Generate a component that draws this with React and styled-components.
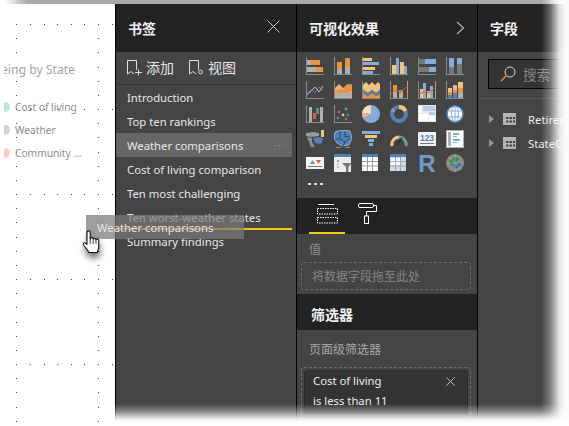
import React from "react";
import styled, { createGlobalStyle } from "styled-components";

const FONT = `"Noto Sans", "Noto Sans CJK SC", sans-serif`;
const ORANGE = "#e8933f";
const TAN = "#f0c67e";
const BLUE = "#85acd6";
const DEEP = "#4f81b8";
const GRAY = "#b0b0b0";
const AXIS = "#8a8a8a";
const DARKBAR = "#777";
const RED = "#d9604a";
const PINK = "#eeb0a4";

const Global = createGlobalStyle`
  html, body { margin: 0; padding: 0; background: #fff; }
  body { font-family: ${FONT}; }
`;

const Page = styled.div`
  position: relative;
  width: 569px;
  height: 426px;
  overflow: hidden;
  background: #fff;
`;

const TopStrip = styled.div`
  height: 4px;
  background: linear-gradient(to right, #fff 0, #fff 4px, #a9a9a9 28px, #a9a9a9 545px, #fff 566px);
`;

const Panels = styled.div`
  display: flex;
  height: 418px;
  margin-left: 4px;
`;

const Canvas = styled.div`
  position: relative;
  flex: none;
  width: 111px;
  overflow: hidden;
  background: #fff;
  border-right: 1px solid #000;
`;

const DotLayer = styled.svg`
  position: absolute;
  left: 0;
  top: 0;
`;

const CanvasTitle = styled.div`
  position: relative;
  margin-top: 57px;
  width: 71px;
  height: 18px;
  display: flex;
  justify-content: flex-end;
  font-size: 12.2px;
  line-height: 18px;
  white-space: nowrap;
  color: #a6a6a6;
`;

const Legend = styled.div`
  position: relative;
  margin-top: 19px;
  display: flex;
  flex-direction: column;
  gap: 5px;
`;

const LegendRow = styled.div`
  display: flex;
  align-items: center;
  gap: 5px;
  height: 18px;
  margin-left: -4px;
  font-size: 10.2px;
  color: #8c8c8c;
  white-space: nowrap;
`;

const LegendDot = styled.span`
  flex: none;
  width: 10px;
  height: 10px;
  border-radius: 50%;
  background: ${(p) => p.$color};
`;

const Panel = styled.div`
  flex: none;
  width: ${(p) => p.$width || 180}px;
  display: flex;
  flex-direction: column;
  background: #444;
  border-right: ${(p) => (p.$last ? "none" : "1px solid #000")};
`;

const Header = styled.div`
  flex: none;
  height: 48px;
  padding: 0 ${(p) => p.$inset || 12}px 0 12px;
  display: flex;
  align-items: center;
  justify-content: space-between;
  background: #222;
  color: #f2f2f2;
  font-size: 14px;
  font-weight: 700;
`;

const BookmarkBar = styled.div`
  flex: none;
  height: 32px;
  box-sizing: content-box;
  padding: 0 0 0 10px;
  display: flex;
  align-items: center;
  gap: 14px;
  border-bottom: 1px solid #333;
`;

const BarAction = styled.div`
  display: flex;
  align-items: center;
  gap: 3px;
  margin-top: -2px;
  font-size: 14px;
  color: #e6e6e6;
`;

const BookmarkList = styled.div`
  padding-right: 4px;
`;

const BookmarkRow = styled.div`
  height: 24px;
  padding: 0 7px 0 11px;
  display: flex;
  align-items: center;
  justify-content: space-between;
  font-size: 11.3px;
  color: #e8e8e8;
  background: ${(p) => (p.$active ? "#666" : "transparent")};
`;

const RowDots = styled.span`
  color: #8f8f8f;
  font-size: 10px;
  letter-spacing: 1px;
`;

const IconGrid = styled.div`
  flex: none;
  height: 146px;
  box-sizing: border-box;
  padding: 5px 0 0 9px;
  display: grid;
  grid-template-columns: repeat(6, 18px);
  grid-auto-rows: 18px;
  column-gap: 10px;
  row-gap: 6.2px;
`;

const MoreDots = styled.div`
  display: flex;
  align-items: center;
  gap: 3px;
  margin: 0 0 5px 2px;
  grid-column: 1 / 2;
`;

const MoreDot = styled.span`
  flex: none;
  width: 3px;
  height: 2px;
  background: #ddd;
`;

const TabBar = styled.div`
  flex: none;
  height: 36px;
  padding-left: 12px;
  display: flex;
  gap: 4px;
  background: #222;
`;

const Tab = styled.div`
  width: 36px;
  height: 36px;
  box-sizing: border-box;
  display: flex;
  align-items: center;
  justify-content: center;
  padding-bottom: 3px;
  border-bottom: 2px solid ${(p) => (p.$active ? "#f2c811" : "transparent")};
`;

const Section = styled.div`
  flex: ${(p) => (p.$grow ? 1 : "none")};
  height: ${(p) => (p.$grow ? "auto" : "60px")};
  padding: ${(p) => (p.$grow ? 11 : 7)}px 6px 0 4px;
  box-sizing: border-box;
  overflow: hidden;
`;

const SectionLabel = styled.div`
  padding-left: 8px;
  height: 17px;
  font-size: 12px;
  line-height: 17px;
  color: ${(p) => p.$color || "#8e8e8e"};
`;

const DropWell = styled.div`
  margin-top: 4px;
  height: 28px;
  box-sizing: border-box;
  padding-left: 10px;
  display: flex;
  align-items: center;
  border: 1px dashed #6b6b6b;
  border-radius: 3px;
  font-size: 12px;
  color: #868686;
`;

const FilterWell = styled.div`
  margin-top: 9px;
  height: 80px;
  box-sizing: border-box;
  padding: 2px;
  border: 1px dashed #6b6b6b;
  border-radius: 3px;
`;

const FilterCard = styled.div`
  position: relative;
  height: 44px;
  box-sizing: border-box;
  padding: 0 8px;
  background: #333;
  border: 1px solid #2a2a2a;
  border-radius: 3px;
  font-size: 11.3px;
  line-height: 20px;
  color: #eee;
`;

const FilterClose = styled.svg`
  position: absolute;
  right: 12px;
  top: 6px;
`;

const FilterHeader = styled.div`
  flex: none;
  height: 36px;
  box-sizing: border-box;
  padding: 3px 0 0 14px;
  display: flex;
  align-items: center;
  background: #222;
  color: #f4f4f4;
  font-size: 14px;
  font-weight: 700;
`;

const SearchArea = styled.div`
  flex: none;
  height: 47px;
  box-sizing: border-box;
  padding: 7px 0 0 10px;
  border-bottom: 1px solid #585858;
`;

const SearchBox = styled.div`
  width: 110px;
  height: 30px;
  box-sizing: border-box;
  padding-left: 11px;
  display: flex;
  align-items: center;
  gap: 7px;
  background: #333;
  border: 1px solid #000;
  font-size: 13.5px;
  color: #888;
`;

const FieldList = styled.div`
  padding: 8px 0 0 11px;
`;

const FieldRow = styled.div`
  height: 24px;
  display: flex;
  align-items: center;
  font-size: 11.3px;
  color: #eee;
  white-space: nowrap;
`;

const Caret = styled.span`
  width: 0;
  height: 0;
  margin-right: 9px;
  border-left: 5px solid #8a9aa8;
  border-top: 4px solid transparent;
  border-bottom: 4px solid transparent;
`;

const FieldName = styled.span`
  margin-left: 12px;
`;

const DragGhost = styled.div`
  position: absolute;
  left: 86px;
  top: 215px;
  width: 158px;
  height: 24px;
  box-sizing: border-box;
  padding: 0 7px 0 11px;
  display: flex;
  align-items: center;
  justify-content: space-between;
  background: rgba(120, 120, 120, 0.72);
  color: #e4e4e4;
  font-size: 11.3px;
`;

const DropLine = styled.div`
  position: absolute;
  left: 116px;
  top: 228px;
  width: 176px;
  height: 2px;
  background: #f2c811;
`;

const HandCursor = styled.svg`
  position: absolute;
  left: 82px;
  top: 230px;
  filter: drop-shadow(1px 5px 3px rgba(0, 0, 0, 0.55));
`;

const FadeRight = styled.div`
  position: absolute;
  top: 0;
  right: 0;
  width: 28px;
  height: 100%;
  background: linear-gradient(to right, rgba(255, 255, 255, 0) 0, rgba(255, 255, 255, 0.3) 9px, rgba(255, 255, 255, 0.85) 18px, #fafafa 24px);
`;

const FadeBottom = styled.div`
  position: absolute;
  left: 115px;
  right: 0;
  top: 404px;
  height: 22px;
  background: linear-gradient(to bottom, rgba(255, 255, 255, 0) 0, rgba(255, 255, 255, 0.35) 7px, rgba(255, 255, 255, 0.9) 15px, #fff 18px);
`;

const Glyph = styled.svg`
  display: block;
  flex: none;
`;

const PanelClose = styled(Glyph)`
  margin-top: -3px;
`;

// small helpers for the visual gallery, everything in an 18x18 box
const R = ({ x, y, w, h, f }) => <rect x={x} y={y} width={w} height={h} fill={f} />;
const Axes = ({ c = AXIS }) => (
  <>
    <rect x="0" y="0" width="1" height="18" fill={c} />
    <rect x="0" y="17" width="18" height="1" fill={c} />
  </>
);
const Bars = ({ items }) => items.map(([x, y, w, h, f], i) => <R key={i} x={x} y={y} w={w} h={h} f={f} />);

const GALLERY = [
  <><Axes /><Bars items={[[1,3,4,5,GRAY],[5,3,9,5,ORANGE],[1,10,9,5,GRAY],[10,10,7,5,ORANGE]]} /></>,
  <><Axes /><Bars items={[[3,5,5,7,ORANGE],[3,12,5,5,GRAY],[11,1,5,9,ORANGE],[11,10,5,7,GRAY]]} /></>,
  <><Axes /><Bars items={[[1,1,9,3,TAN],[1,5,16,3,BLUE],[1,10,12,3,TAN],[1,14,10,3,BLUE]]} /></>,
  <><Axes /><Bars items={[[2,8,4,9,TAN],[6,1,3,16,BLUE],[10,5,4,12,TAN],[14,9,3,8,BLUE]]} /></>,
  <><Axes /><Bars items={[[1,2,6,5,DARKBAR],[7,2,11,5,BLUE],[1,10,10,5,DARKBAR],[11,10,7,5,BLUE]]} /></>,
  <><Axes /><Bars items={[[3,1,5,9,BLUE],[3,10,5,7,DARKBAR],[11,1,5,6,BLUE],[11,7,5,10,DARKBAR]]} /></>,
  <><Axes /><polyline points="1,15 5,9 9,12 13,6 17,9" fill="none" stroke={DEEP} strokeWidth="1" /><polyline points="1,13 5,10 9,6 13,11 17,5" fill="none" stroke={PINK} strokeWidth="1" /></>,
  <><Axes /><path d="M1 7L5 3 9 7 14 3 18 5V17H1Z" fill={TAN} opacity=".9" /><path d="M1 11L5 8 9 9 12 4 18 3V10L12 13H1Z" fill={ORANGE} /><path d="M1 12H18V17H1Z" fill={GRAY} /></>,
  <><Axes /><path d="M1 4L4 1 7 4 10 1 13 4 16 1 18 3V9L14 12 10 9 6 12 1 9Z" fill={TAN} /><path d="M1 9L6 12 10 9 14 12 18 9V13L14 15 10 12 6 15 1 12Z" fill={DEEP} /><path d="M1 12L6 15 10 12 14 15 18 13V17H1Z" fill={ORANGE} /></>,
  <><Axes /><Bars items={[[3,4,4,7,ORANGE],[3,11,4,6,GRAY],[9,9,4,3,ORANGE],[9,12,4,5,GRAY],[17,0,1,18,ORANGE]]} /><polyline points="1,13 6,9 11,11 16,6" fill="none" stroke={RED} strokeWidth="1" /></>,
  <><Axes /><Bars items={[[2,8,3,9,TAN],[5,2,3,15,BLUE],[9,10,3,7,TAN],[12,5,3,12,BLUE],[17,0,1,18,ORANGE]]} /><polyline points="1,13 6,11 11,12 16,7" fill="none" stroke={RED} strokeWidth="1" /></>,
  <><Axes /><Bars items={[[2,7,4,4,TAN],[2,11,4,3,ORANGE],[2,14,4,3,DEEP],[7,4,4,5,PINK],[7,9,4,3,ORANGE],[7,12,4,5,DEEP],[12,1,5,6,TAN],[12,7,5,5,ORANGE],[12,12,5,5,GRAY]]} /></>,
  <><Axes /><Bars items={[[3,2,3,15,GRAY],[7,8,3,6,RED],[10,3,3,6,"#5c8f6a"],[14,2,3,15,GRAY]]} /></>,
  <><Axes /><circle cx="5" cy="7" r="1.4" fill={RED} /><circle cx="12" cy="4" r="1.4" fill="#5fa59a" /><circle cx="9" cy="10" r="1.4" fill={TAN} /><circle cx="4" cy="13" r="1.4" fill={DEEP} /><circle cx="14" cy="10" r="1.4" fill={DEEP} /><circle cx="12" cy="14" r="1.4" fill="#777" /></>,
  <><path d="M9 0A9 9 0 1 1 1.5 14L9 9Z" fill={BLUE} /><path d="M9 9L1.5 14A9 9 0 0 1 0 8Z" fill={PINK} /><path d="M9 9L0 8A9 9 0 0 1 9 0Z" fill="#f3dfbd" /></>,
  <><circle cx="9" cy="9" r="7" fill="none" stroke={DEEP} strokeWidth="4" /><path d="M9 2A7 7 0 0 1 15.5 6" fill="none" stroke={TAN} strokeWidth="4" /><path d="M2.5 7A7 7 0 0 1 4 4.5" fill="none" stroke="#9a9a9a" strokeWidth="4" /></>,
  <><R x={0} y={0} w={18} h={17} f="#e9e9e9" /><Bars items={[[1,1,3,3,"#fff"],[5,1,12,5,"#b7cfe6"],[1,5,3,3,"#fff"],[1,9,9,7,"#fff"],[11,7,6,3,"#b7cfe6"],[11,11,6,5,"#fff"]]} /></>,
  <><circle cx="9" cy="9" r="8" fill="#fff" stroke={DEEP} strokeWidth="1.4" /><ellipse cx="9" cy="9" rx="3.5" ry="8" fill="none" stroke={BLUE} /><path d="M1.5 6H16.5M1.5 12H16.5M9 1V17" stroke={BLUE} /></>,
  <><path d="M0 3L7 2 13 3 13 6 5 7 0 6Z" fill="#9a9a9a" /><path d="M15 0H18V7H15Z" fill={TAN} /><path d="M1 7L6 8V12L9 17H5L3 12Z" fill="#8c8c8c" /><path d="M7 8L14 7 17 9 15 14 9 13Z" fill={DEEP} /></>,
  <><path d="M1 2L7 0 16 1 18 8 15 15 8 16 3 13 0 8Z" fill={DEEP} stroke="#cfe0f0" strokeWidth=".6" /><path d="M6 1V9L1 9M6 9L11 12 9 16M11 12L17 8M11 1V7L16 6" stroke="#1f3f66" strokeWidth=".8" fill="none" /><R x={2} y={17} w={5} h={1} f={AXIS} /><R x={11} y={17} w={5} h={1} f={AXIS} /></>,
  <><Bars items={[[0,1,18,3,BLUE],[3,5,12,3,TAN],[6,9,6,3,BLUE],[7,13,4,3,BLUE]]} /></>,
  <><path d="M2 16A7.5 7.5 0 0 1 9 7" fill="none" stroke={TAN} strokeWidth="3" /><path d="M9 7A7.5 7.5 0 0 1 16 16" fill="none" stroke="#6f9f8c" strokeWidth="3" /><path d="M7 15L12 8" stroke="#333" strokeWidth="1.6" /></>,
  <><R x={0} y={2} w={18} h={14} f="#f4f4f4" /><text x="9" y="11" textAnchor="middle" fontSize="8.5" fontWeight="700" fontFamily="Liberation Sans" fill={DEEP}>123</text><R x={2} y={13} w={14} h={1} f="#777" /></>,
  <><R x={0} y={0} w={18} h={18} f={GRAY} /><R x={1} y={1} w={16} h={16} f="#fff" /><R x={2} y={2} w={3} h={14} f={GRAY} /><Bars items={[[7,3,6,2,BLUE],[7,6,4,1,BLUE],[7,9,7,2,BLUE],[7,12,4,1,BLUE]]} /></>,
  <><R x={0} y={3} w={18} h={12} f="#f4f4f4" /><path d="M4 10L6.5 6 9 10Z" fill="#5f9f84" /><path d="M10 6H15L12.5 10Z" fill={RED} /><R x={2} y={12} w={14} h={1} f="#777" /></>,
  <><R x={0} y={0} w={17} h={18} f="#eee" /><R x={0} y={0} w={17} h={3} f={DEEP} /><Bars items={[[3,6,2,2,BLUE],[3,9,2,2,TAN],[3,12,2,2,PINK]]} /><path d="M8 9H18L14.5 13V18H12V13Z" fill="#777" /></>,
  <><R x={0} y={0} w={16} h={17} f="#fff" /><R x={0} y={0} w={16} h={3} f={DEEP} /><path d="M5.5 3V17M10.5 3V17M0 7.5H16M0 12H16" stroke="#999" /></>,
  <><R x={0} y={0} w={16} h={17} f="#cfdbe9" /><R x={0} y={0} w={16} h={3} f={DEEP} /><Bars items={[[1,4,4,3,"#fff"],[6,4,4,3,"#fff"],[1,8,4,3,"#fff"],[6,8,4,3,"#fff"]]} /><path d="M5.5 3V17M10.5 3V17M0 7.5H16M0 12H16" stroke="#9aa8b8" /></>,
  <text x="9" y="17.5" textAnchor="middle" fontSize="24" fontWeight="700" fontFamily="Liberation Sans" fill="#6f9bc8">R</text>,
  <><circle cx="9" cy="9" r="9" fill="#8a8a8a" /><path d="M3 7L9 3 14 5 10 8 5 12Z" fill="#2f8f4f" /><path d="M7 11L14 8 15 12 9 15Z" fill="#2f6fb8" /><path d="M1 9H17M9 0V18M3 3L15 15" stroke="#b0b0b0" strokeWidth=".6" /></>,
];

const DOT_COLS = [16, 30, 44, 57, 71, 84, 98, 112];
const DOT_ROWS = [24, 109, 194, 279, 364];
const DOT_STEPS = Array.from({ length: 29 }, (_, i) => Math.round(24 + i * 14.17));

const CanvasDots = () => (
  <DotLayer width="111" height="418" viewBox="4 4 111 418">
    {DOT_ROWS.map((y) => DOT_COLS.map((x) => <rect key={`${x}-${y}`} x={x} y={y} width="1" height="1" fill="#444" />))}
    {DOT_STEPS.map((y) => [16, 98].map((x) => <rect key={`c${x}-${y}`} x={x} y={y} width="1" height="1" fill="#444" />))}
  </DotLayer>
);

const BookmarkIcon = ({ badge }) => (
  <Glyph width="17" height="17" viewBox="0 0 17 17" fill="none" stroke="#e0e0e0">
    <path d="M1.5 1.5H10.5V11M1.5 1.5V15L5 12.5 8 15" />
    {badge === "plus" ? <path d="M9 13.5H16M12.5 10.5V16.5" /> : <circle cx="12.5" cy="13" r="1.8" />}
  </Glyph>
);

const CloseLines = () => <path d="M.5.5L12.5 12.5M12.5.5L.5 12.5" />;

const FieldTableIcon = () => (
  <Glyph width="13" height="12" viewBox="0 0 13 12">
    <rect width="13" height="12" fill="#b4b4b4" />
    <path d="M3 4H5.5V6H3ZM6.5 4H9V6H6.5ZM10 4H12V6H10ZM3 7.5H5.5V9.5H3ZM6.5 7.5H9V9.5H6.5ZM10 7.5H12V9.5H10Z" fill="#444" />
  </Glyph>
);

const BOOKMARKS = [
  "Introduction",
  "Top ten rankings",
  "Weather comparisons",
  "Cost of living comparison",
  "Ten most challenging",
  "Ten worst-weather states",
  "Summary findings",
];

const LEGEND = [
  ["Cost of living", "#b7e9e5"],
  ["Weather", "#cfd3d6"],
  ["Community ...", "#fcc9cb"],
];

export default function App() {
  return (
    <Page>
      <Global />
      <TopStrip />
      <Panels>
        <Canvas>
          <CanvasDots />
          <CanvasTitle>Well-being by State</CanvasTitle>
          <Legend>
            {LEGEND.map(([name, color]) => (
              <LegendRow key={name}>
                <LegendDot $color={color} />
                {name}
              </LegendRow>
            ))}
          </Legend>
        </Canvas>

        <Panel>
          <Header $inset={16}>
            书签
            <PanelClose width="13" height="13" viewBox="0 0 13 13" fill="none" stroke="#c8c8c8">
              <CloseLines />
            </PanelClose>
          </Header>
          <BookmarkBar>
            <BarAction>
              <BookmarkIcon badge="plus" />
              添加
            </BarAction>
            <BarAction>
              <BookmarkIcon badge="view" />
              视图
            </BarAction>
          </BookmarkBar>
          <BookmarkList>
            {BOOKMARKS.map((name) => (
              <BookmarkRow key={name} $active={name === "Weather comparisons"}>
                {name}
                {name === "Weather comparisons" && <RowDots>···</RowDots>}
              </BookmarkRow>
            ))}
          </BookmarkList>
        </Panel>

        <Panel>
          <Header>
            可视化效果
            <Glyph width="9" height="14" viewBox="0 0 9 14" fill="none" stroke="#b5b5b5" strokeWidth="1.2">
              <path d="M1 1L7.5 7 1 13" />
            </Glyph>
          </Header>
          <IconGrid>
            {GALLERY.map((icon, i) => (
              <Glyph key={i} width="18" height="18" viewBox="0 0 18 18">
                {icon}
              </Glyph>
            ))}
            <MoreDots>
              <MoreDot />
              <MoreDot />
              <MoreDot />
            </MoreDots>
          </IconGrid>
          <TabBar>
            <Tab $active>
              <Glyph width="21" height="20" viewBox="0 0 21 20" fill="none" stroke="#fff">
                <path d="M1 .5H17" />
                <path d="M.5 4.5H20.5V10H.5V4.5M.5 13.5H20.5V19H.5Z" strokeDasharray="1.5 1" />
              </Glyph>
            </Tab>
            <Tab>
              <Glyph width="19" height="21" viewBox="0 0 19 21" fill="none" stroke="#fff">
                <rect x=".5" y=".5" width="15" height="4" rx="1.5" />
                <path d="M15.5 2.5H18.5V8.5H8.5V13" />
                <rect x="6.5" y="13" width="4" height="7.5" />
              </Glyph>
            </Tab>
          </TabBar>
          <Section>
            <SectionLabel>值</SectionLabel>
            <DropWell>将数据字段拖至此处</DropWell>
          </Section>
          <FilterHeader>筛选器</FilterHeader>
          <Section $grow>
            <SectionLabel $color="#a8a8a8">页面级筛选器</SectionLabel>
            <FilterWell>
              <FilterCard>
                Cost of living
                <br />
                is less than 11
                <FilterClose width="9" height="9" viewBox="0 0 13 13" fill="none" stroke="#c0c0c0" strokeWidth="1.4">
                  <CloseLines />
                </FilterClose>
              </FilterCard>
            </FilterWell>
          </Section>
        </Panel>

        <Panel $width={91} $last>
          <Header>字段</Header>
          <SearchArea>
            <SearchBox>
              <Glyph width="16" height="16" viewBox="0 0 16 16" fill="none">
                <circle cx="10" cy="6" r="5" stroke="#d8d8d8" />
                <path d="M6.5 9.5L1 15" stroke="#d09a5a" strokeWidth="1.2" />
              </Glyph>
              搜索
            </SearchBox>
          </SearchArea>
          <FieldList>
            {["Retirement", "StateCodes"].map((name) => (
              <FieldRow key={name}>
                <Caret />
                <FieldTableIcon />
                <FieldName>{name}</FieldName>
              </FieldRow>
            ))}
          </FieldList>
        </Panel>
      </Panels>

      <FadeRight />
      <FadeBottom />
      <DropLine />
      <DragGhost>
        Weather comparisons
        <RowDots>···</RowDots>
      </DragGhost>
      <HandCursor width="19" height="25" viewBox="0 0 19 25">
        <path
          d="M5 2.5a1.6 1.6 0 0 1 3.2 0V9a1.5 1.5 0 0 1 3 .3 1.5 1.5 0 0 1 2.8.5 1.5 1.5 0 0 1 2.8.8V16c0 2.5-1 4-1.5 6.5H7C6 20 3.5 18 1.5 15c-1-1.6.8-3 2-1.8L5 14.5Z"
          fill="#fff"
          stroke="#111"
          strokeWidth="1.1"
          strokeLinejoin="round"
        />
        <path d="M8.2 9V14M11.2 9.5V14M14 10V14" stroke="#111" strokeWidth=".8" fill="none" />
      </HandCursor>
    </Page>
  );
}
